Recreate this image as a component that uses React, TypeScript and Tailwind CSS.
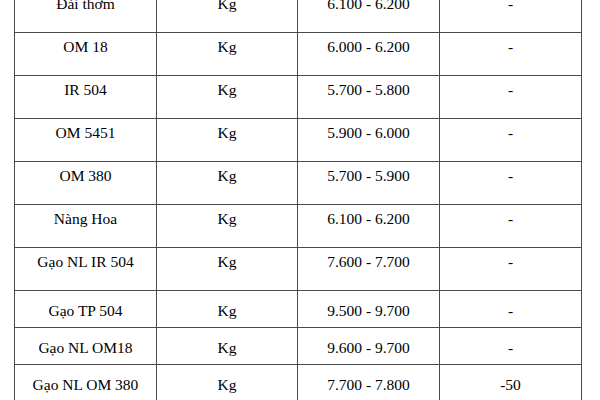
const rows = [
    { name: "Đài thơm", unit: "Kg", price: "6.100 - 6.200", change: "-", tall: true },
    { name: "OM 18", unit: "Kg", price: "6.000 - 6.200", change: "-", tall: true },
    { name: "IR 504", unit: "Kg", price: "5.700 - 5.800", change: "-", tall: true },
    { name: "OM 5451", unit: "Kg", price: "5.900 - 6.000", change: "-", tall: true },
    { name: "OM 380", unit: "Kg", price: "5.700 - 5.900", change: "-", tall: true },
    { name: "Nàng Hoa", unit: "Kg", price: "6.100 - 6.200", change: "-", tall: true },
    { name: "Gạo NL IR 504", unit: "Kg", price: "7.600 - 7.700", change: "-", tall: true },
    { name: "Gạo TP 504", unit: "Kg", price: "9.500 - 9.700", change: "-", tall: false },
    { name: "Gạo NL OM18", unit: "Kg", price: "9.600 - 9.700", change: "-", tall: false },
    { name: "Gạo NL OM 380", unit: "Kg", price: "7.700 - 7.800", change: "-50", tall: false },
];

export default function App() {
    return (
        <div
            className="h-[400px] w-[600px] overflow-hidden bg-white text-[15.5px] leading-[17px] text-black"
            style={{ fontFamily: '"Liberation Serif", "Times New Roman", serif' }}
        >
            <div className="-mt-[10px] ml-[14px] w-[568px] border-l border-[#4a4a4a]">
                {rows.map((r) => (
                    <div
                        key={r.name}
                        className={`flex border-b border-[#4a4a4a] ${r.tall ? "h-[43px]" : "h-[37px]"}`}
                    >
                        <div className={`w-[142px] border-r border-[#4a4a4a] text-center ${r.tall ? "pt-[5px]" : "pt-[11px]"}`}>
                            {r.name}
                        </div>
                        <div className={`w-[141px] border-r border-[#4a4a4a] text-center ${r.tall ? "pt-[5px]" : "pt-[11px]"}`}>
                            {r.unit}
                        </div>
                        <div className={`w-[142px] border-r border-[#4a4a4a] text-center ${r.tall ? "pt-[5px]" : "pt-[11px]"}`}>
                            {r.price}
                        </div>
                        <div className={`w-[142px] border-r border-[#4a4a4a] text-center ${r.tall ? "pt-[5px]" : "pt-[11px]"}`}>
                            {r.change}
                        </div>
                    </div>
                ))}
            </div>
        </div>
    );
}
